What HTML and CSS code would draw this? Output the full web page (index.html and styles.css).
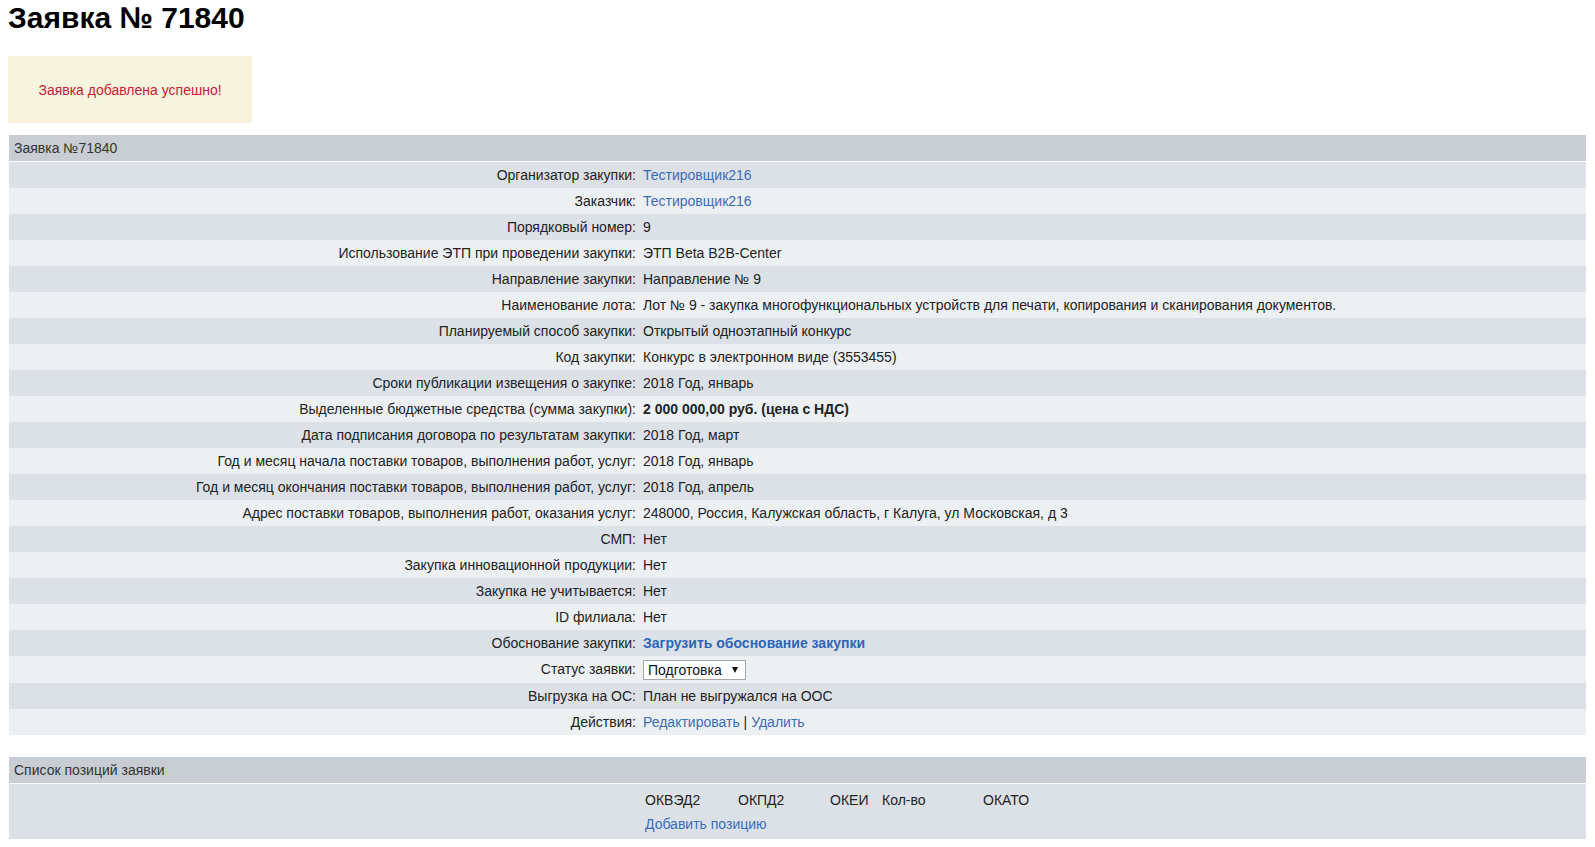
FILE: index.html
```html
<!DOCTYPE html>
<html lang="ru">
<head>
<meta charset="utf-8">
<title>Заявка № 71840</title>
<link rel="stylesheet" href="styles.css">
</head>
<body>
<div class="page">
  <h1 class="title">Заявка № 71840</h1>
  <div class="notice">Заявка добавлена успешно!</div>

  <section class="panel">
    <div class="panel-head">Заявка №71840</div>
    <div class="rows">
      <div class="row"><div class="lbl">Организатор закупки:</div><div class="val"><a href="#" class="lnk">Тестировщик216</a></div></div>
      <div class="row"><div class="lbl">Заказчик:</div><div class="val"><a href="#" class="lnk">Тестировщик216</a></div></div>
      <div class="row"><div class="lbl">Порядковый номер:</div><div class="val">9</div></div>
      <div class="row"><div class="lbl">Использование ЭТП при проведении закупки:</div><div class="val">ЭТП Beta B2B-Center</div></div>
      <div class="row"><div class="lbl">Направление закупки:</div><div class="val">Направление № 9</div></div>
      <div class="row"><div class="lbl">Наименование лота:</div><div class="val">Лот № 9 - закупка многофункциональных устройств для печати, копирования и сканирования документов.</div></div>
      <div class="row"><div class="lbl">Планируемый способ закупки:</div><div class="val">Открытый одноэтапный конкурс</div></div>
      <div class="row"><div class="lbl">Код закупки:</div><div class="val">Конкурс в электронном виде (3553455)</div></div>
      <div class="row"><div class="lbl">Сроки публикации извещения о закупке:</div><div class="val">2018 Год, январь</div></div>
      <div class="row"><div class="lbl">Выделенные бюджетные средства (сумма закупки):</div><div class="val"><b>2 000 000,00 руб. (цена с НДС)</b></div></div>
      <div class="row"><div class="lbl">Дата подписания договора по результатам закупки:</div><div class="val">2018 Год, март</div></div>
      <div class="row"><div class="lbl">Год и месяц начала поставки товаров, выполнения работ, услуг:</div><div class="val">2018 Год, январь</div></div>
      <div class="row"><div class="lbl">Год и месяц окончания поставки товаров, выполнения работ, услуг:</div><div class="val">2018 Год, апрель</div></div>
      <div class="row"><div class="lbl">Адрес поставки товаров, выполнения работ, оказания услуг:</div><div class="val">248000, Россия, Калужская область, г Калуга, ул Московская, д 3</div></div>
      <div class="row"><div class="lbl">СМП:</div><div class="val">Нет</div></div>
      <div class="row"><div class="lbl">Закупка инновационной продукции:</div><div class="val">Нет</div></div>
      <div class="row"><div class="lbl">Закупка не учитывается:</div><div class="val">Нет</div></div>
      <div class="row"><div class="lbl">ID филиала:</div><div class="val">Нет</div></div>
      <div class="row"><div class="lbl">Обоснование закупки:</div><div class="val"><a href="#" class="lnk lnk-bold">Загрузить обоснование закупки</a></div></div>
      <div class="row row-select"><div class="lbl">Статус заявки:</div><div class="val val-select">
        <span class="select-wrap">
          <select class="status"><option>Подготовка</option></select>
          <span class="select-arrow"></span>
        </span>
      </div></div>
      <div class="row"><div class="lbl">Выгрузка на ОС:</div><div class="val">План не выгружался на ООС</div></div>
      <div class="row"><div class="lbl">Действия:</div><div class="val"><a href="#" class="lnk">Редактировать</a> | <a href="#" class="lnk">Удалить</a></div></div>
    </div>
  </section>

  <section class="panel panel-positions">
    <div class="panel-head">Список позиций заявки</div>
    <div class="positions">
      <div class="pos-spacer"></div>
      <div class="pos-table">
        <div class="pos-head">
          <span class="c c1">ОКВЭД2</span>
          <span class="c c2">ОКПД2</span>
          <span class="c c3">ОКЕИ</span>
          <span class="c c4">Кол-во</span>
          <span class="c c5">ОКАТО</span>
        </div>
        <div class="pos-add"><a href="#" class="lnk">Добавить позицию</a></div>
      </div>
    </div>
  </section>
</div>
</body>
</html>
```

FILE: styles.css
```css
html, body {
  margin: 0;
  padding: 0;
  background: #ffffff;
}

body {
  font-family: "Liberation Sans", Arial, sans-serif;
  font-size: 14px;
  color: #222222;
}

.page {
  padding: 2px 8px 0 8px;
}

.title {
  margin: 0;
  font-size: 30px;
  line-height: 32px;
  font-weight: bold;
  color: #000000;
}

.notice {
  margin-top: 22px;
  width: 244px;
  height: 67px;
  display: flex;
  align-items: center;
  justify-content: center;
  background: #f6f4dc;
  color: #c4213a;
  font-size: 14px;
}

.panel {
  margin: 12px 1px 0 1px;
}

.panel-positions {
  margin-top: 22px;
}

.panel-head {
  height: 26px;
  line-height: 26px;
  padding-left: 5px;
  background: #c8cdd4;
  color: #333333;
  border-bottom: 1px solid #ffffff;
}

.row {
  display: grid;
  grid-template-columns: 631px 1fr;
  height: 26px;
  line-height: 26px;
  background: #dce1e8;
}

.row:nth-child(even) {
  background: #edf0f3;
}

.row-select {
  height: 27px;
  line-height: 27px;
}

.lbl {
  text-align: right;
  padding-right: 4px;
  white-space: nowrap;
}

.val {
  padding-left: 3px;
  white-space: nowrap;
}

.val-select {
  display: flex;
  align-items: center;
}

.lnk {
  color: #3a6cb6;
  text-decoration: none;
}

.lnk-bold {
  font-weight: bold;
  color: #2c66b6;
}

.select-wrap {
  position: relative;
  display: block;
  height: 20px;
  margin-top: 1px;
}

.status {
  -webkit-appearance: none;
  appearance: none;
  display: block;
  width: 103px;
  height: 20px;
  margin: 0;
  padding: 0 0 0 4px;
  border: 1px solid #a6a6a6;
  border-radius: 0;
  background: #ffffff;
  font-family: "Liberation Sans", Arial, sans-serif;
  font-size: 14px;
  color: #111111;
  line-height: 18px;
}

.select-arrow {
  position: absolute;
  right: 8px;
  top: 7px;
  width: 0;
  height: 0;
  border-left: 3px solid transparent;
  border-right: 3px solid transparent;
  border-top: 6px solid #111111;
  pointer-events: none;
}

.positions {
  display: grid;
  grid-template-columns: 636px 1fr;
  background: #dce1e8;
  padding: 4px 0 3px 0;
}

.pos-head {
  display: flex;
  height: 24px;
  line-height: 24px;
}

.c {
  display: block;
}

.c1 { width: 93px; }
.c2 { width: 92px; }
.c3 { width: 52px; }
.c4 { width: 101px; }
.c5 { width: 60px; }

.pos-add {
  height: 24px;
  line-height: 24px;
}
```
